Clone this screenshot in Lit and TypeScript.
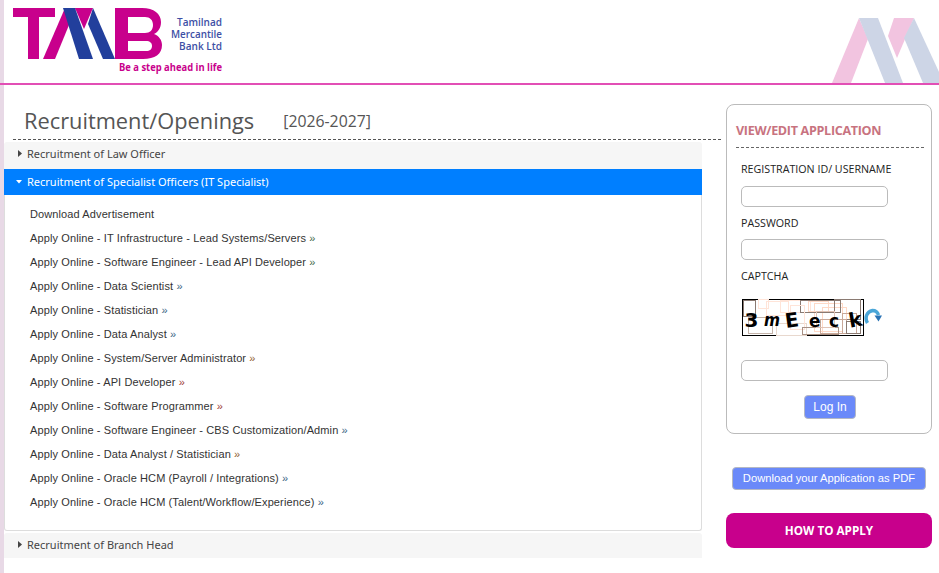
import { LitElement, html, css, svg } from "lit";
import { customElement } from "lit/decorators.js";

const items: [string, string][] = [
  ["Apply Online - IT Infrastructure - Lead Systems/Servers", "g"],
  ["Apply Online - Software Engineer - Lead API Developer", "g"],
  ["Apply Online - Data Scientist", "b"],
  ["Apply Online - Statistician", "b"],
  ["Apply Online - Data Analyst", "b"],
  ["Apply Online - System/Server Administrator", "o"],
  ["Apply Online - API Developer", "r"],
  ["Apply Online - Software Programmer", "r"],
  ["Apply Online - Software Engineer - CBS Customization/Admin", "b"],
  ["Apply Online - Data Analyst / Statistician", "o"],
  ["Apply Online - Oracle HCM (Payroll / Integrations)", "b"],
  ["Apply Online - Oracle HCM (Talent/Workflow/Experience)", "b"],
];

const captchaBoxes: [number, number, number, number, string][] = [
  [1, 1, 12, 16, "#8a7a72"], [24, 2, 22, 14, "#ffe4d8"], [38, 1, 30, 12, "#ffe4d8"],
  [72, 4, 28, 28, "#ffd9c6"], [80, 8, 24, 26, "#ffd9c6"], [92, 0, 26, 20, "#8a7a72"],
  [58, 1, 40, 12, "#8a7a72"], [6, 18, 24, 16, "#c4b4aa"], [34, 24, 30, 12, "#e8d8ce"],
  [78, 20, 26, 14, "#c9a898"], [100, 14, 14, 20, "#c9a898"], [16, 0, 10, 9, "#ffe4d8"],
  [48, 6, 14, 24, "#ffe4d8"], [66, 2, 20, 10, "#ffd9c6"], [104, 22, 14, 12, "#8a7a72"],
  [60, 28, 36, 7, "#a89084"], [74, 12, 18, 16, "#e0c4b6"],
];

@customElement("app-root")
export class AppRoot extends LitElement {
  static styles = css`
    :host { display: block; width: 939px; height: 573px; overflow: hidden; background: #fff; font-family: "Liberation Sans", Arial, sans-serif; }
    .top { height: 83px; border-bottom: 2px solid #e24fb5; background: linear-gradient(to right, #e8d9e6 4px, transparent 4px); display: flex; justify-content: space-between; align-items: flex-end; }
    .logo { display: block; }
    .mark { display: block; }
    .main { height: 488px; border-left: 4px solid #e8d9e6; display: flex; align-items: flex-start; }
    .left { width: 698px; margin-right: 24px; flex: none; }
    .heading { margin: 0 -19px 0 9px; height: 55px; border-bottom: 1px dashed #555; box-sizing: border-box; display: flex; align-items: flex-end; gap: 29px; padding: 0 0 2px 11px; color: #555; font-family: "Open Sans", sans-serif; font-weight: 400; }
    .h1 { font-size: 21.8px; line-height: 32px; }
    .years { font-size: 15.8px; line-height: 32px; }
    .acc { margin-top: 2px; font-family: "Noto Sans", sans-serif; }
    .ah { height: 27px; box-sizing: border-box; padding: 0 0 2px 9px; display: flex; align-items: center; gap: 5px; font-size: 11px; color: #454545; background: #f6f6f6; border-radius: 3px 3px 0 0; }
    .ah.first { padding-bottom: 4px; }
    .ah.on { height: 26px; background: #007fff; color: #fff; border-radius: 0; }
    .tri { flex: none; width: 9px; height: 9px; display: block; }
    .panel { height: 336px; box-sizing: border-box; border: 1px solid #ddd; border-top: 0; border-radius: 0 0 3px 3px; padding: 7px 25px; font-family: "Liberation Sans", sans-serif; font-size: 11px; color: #333; }
    .row { height: 24px; line-height: 24px; letter-spacing: 0.11px; white-space: nowrap; }
    .row b { font-weight: 400; }
    .g { color: #3f6a4a; } .b { color: #3a6585; } .o { color: #8f6030; } .r { color: #a04038; }
    .ah.last { margin-top: 2px; height: 25px; }
    .side { width: 206px; flex: none; margin-top: 19px; }
    .card { height: 330px; box-sizing: border-box; border: 1px solid #bbb; border-radius: 8px; padding: 16px 7px 0 9px; font-family: "Open Sans", sans-serif; }
    .ct { font-size: 12.6px; font-weight: 700; color: #c8737f; letter-spacing: -0.33px; line-height: 19px; height: 26px; border-bottom: 1px dashed #666; box-sizing: content-box; white-space: nowrap; }
    .f { padding-left: 5px; }
    .lab { font-size: 10.7px; line-height: 16px; color: #222; }
    .inp { display: block; width: 147px; height: 21px; box-sizing: border-box; border: 1px solid #bbb; border-radius: 5px; background: #fff; padding: 0; }
    .l1 { margin-top: 13px; } .i1 { margin-top: 9px; }
    .l2 { margin-top: 8px; } .i2 { margin-top: 8px; }
    .l3 { margin-top: 8px; }
    .cap { display: flex; margin-top: 15px; margin-left: 1px; align-items: flex-start; }
    .refresh { margin-top: 9px; display: block; }
    .i3 { margin-top: 24px; }
    .btn { border: 1px solid #b4b8c4; background: #6a89f9; color: #fff; border-radius: 4px; font-family: "Liberation Sans", sans-serif; font-size: 12px; box-sizing: border-box; display: flex; align-items: center; justify-content: center; }
    .login { width: 52px; height: 24px; margin: 14px 0 0 63px; }
    .pdf { width: 194px; height: 23px; margin: 33px 0 0 6px; font-size: 11.2px; padding-bottom: 2px; }
    .how { height: 35px; box-sizing: border-box; padding-bottom: 2px; margin-top: 23px; border-radius: 8px; background: #c8008c; color: #fff; font-family: "Open Sans", sans-serif; font-weight: 700; font-size: 11.7px; display: flex; align-items: center; justify-content: center; }
  `;

  private tri(open: boolean, fill: string) {
    return html`<svg class="tri" viewBox="0 0 9 9">
      <path fill=${fill} d=${open ? "M3 3h6L6 6.500z" : "M5 1v7l4-3.500z"}></path>
    </svg>`;
  }

  render() {
    return html`
      <div class="top">
        <svg class="logo" width="230" height="83" viewBox="0 0 230 83">
          <path fill="#c8008c" d="M13 8h42v9H39v42H28V17H13z"></path>
          <path fill="#c8008c" d="M43 59 65 8h11L55 59z"></path>
          <path fill="#c8008c" d="M75 8h18l-9 21z"></path>
          <path fill="#c8008c" fill-rule="evenodd" d="M115 8h27c12 0 19 6 19 14 0 6-3 10-7 12 5 2 8 6 8 11 0 9-7 14-19 14h-28zm13 9v16h17c5 0 8-3 8-8s-3-8-8-8zm0 24v10h18c4 0 6-2 6-5s-2-5-6-5z"></path>
          <path fill="#223f9c" d="M63 8h12l18 51H79z"></path>
          <path fill="#223f9c" d="M93 8l22 51h-12L88 24z"></path>
          <g fill="#3d4fa5" font-family="Open Sans" font-weight="600" text-anchor="end">
            <text x="222" y="25.500" font-size="11" textLength="45" lengthAdjust="spacingAndGlyphs">Tamilnad</text>
            <text x="222" y="37.500" font-size="11" textLength="51" lengthAdjust="spacingAndGlyphs">Mercantile</text>
            <text x="222" y="49.500" font-size="11" textLength="43" lengthAdjust="spacingAndGlyphs">Bank Ltd</text>
          </g>
          <text x="222" y="71" text-anchor="end" fill="#c8008c" font-family="Open Sans" font-size="10" font-weight="700" textLength="103" lengthAdjust="spacingAndGlyphs">Be a step ahead in life</text>
        </svg>
        <svg class="mark" width="107" height="66" viewBox="832 17 107 66">
          <path fill="#f2c4e0" d="M832 83 859 18l9 21-17 44z"></path>
          <path fill="#f2c4e0" d="M894 18h20l-17 40-9-22z"></path>
          <path fill="#cdd5e6" d="M859 18h19l25 65h-18z"></path>
          <path fill="#cdd5e6" d="M914 18l25 54v11h-16l-19-45z"></path>
        </svg>
      </div>
      <div class="main">
        <div class="left">
          <div class="heading"><span class="h1">Recruitment∕Openings</span><span class="years">[2026-2027]</span></div>
          <div class="acc">
            <div class="ah first">${this.tri(false, "#454545")}Recruitment of Law Officer</div>
            <div class="ah on">${this.tri(true, "#fff")}Recruitment of Specialist Officers (IT Specialist)</div>
            <div class="panel">
              <div class="row">Download Advertisement</div>
              ${items.map(([t, c]) => html`<div class="row">${t} <b class=${c}>»</b></div>`)}
            </div>
            <div class="ah last">${this.tri(false, "#454545")}Recruitment of Branch Head</div>
          </div>
        </div>
        <div class="side">
          <div class="card">
            <div class="ct">VIEW/EDIT APPLICATION</div>
            <div class="f">
              <div class="lab l1">REGISTRATION ID/ USERNAME</div>
              <input class="inp i1" />
              <div class="lab l2">PASSWORD</div>
              <input class="inp i2" />
              <div class="lab l3">CAPTCHA</div>
              <div class="cap">
                <svg width="122" height="37" viewBox="0 0 122 37">
                  <rect x="0.500" y="0.500" width="121" height="36" fill="#fff" stroke="#000"></rect>
                  ${captchaBoxes.map(([x, y, w, h, c]) => svg`<rect x=${x + 0.5} y=${y + 0.5} width=${w} height=${h} fill="none" stroke=${c}></rect>`)}
                  <g font-family="DejaVu Sans" font-weight="700" fill="#000">
                    <text x="2.500" y="28" font-size="20">3</text>
                    <text x="22" y="27" font-size="17" textLength="16" lengthAdjust="spacingAndGlyphs" font-style="italic">m</text>
                    <text x="43" y="28" font-size="20" transform="rotate(-8 50 22)">E</text>
                    <text x="67" y="28" font-size="17">e</text>
                    <text x="87" y="28" font-size="17">c</text>
                    <text x="107" y="28" font-size="20" transform="rotate(-10 112 22)">k</text>
                  </g>
                </svg>
                <svg class="refresh" width="18" height="18" viewBox="0 0 18 18">
                  <path fill="none" stroke="#4aa6d8" stroke-width="3.500" d="M3.500 15C0.500 10 2.500 3.500 8.500 2.500c3 0 5 1.500 6 4.500"></path>
                  <path fill="#2a73b5" d="M10.500 7.500h7.500l-3.500 6z"></path>
                </svg>
              </div>
              <input class="inp i3" />
              <div class="btn login">Log In</div>
            </div>
          </div>
          <div class="btn pdf">Download your Application as PDF</div>
          <div class="how">HOW TO APPLY</div>
        </div>
      </div>
    `;
  }
}
